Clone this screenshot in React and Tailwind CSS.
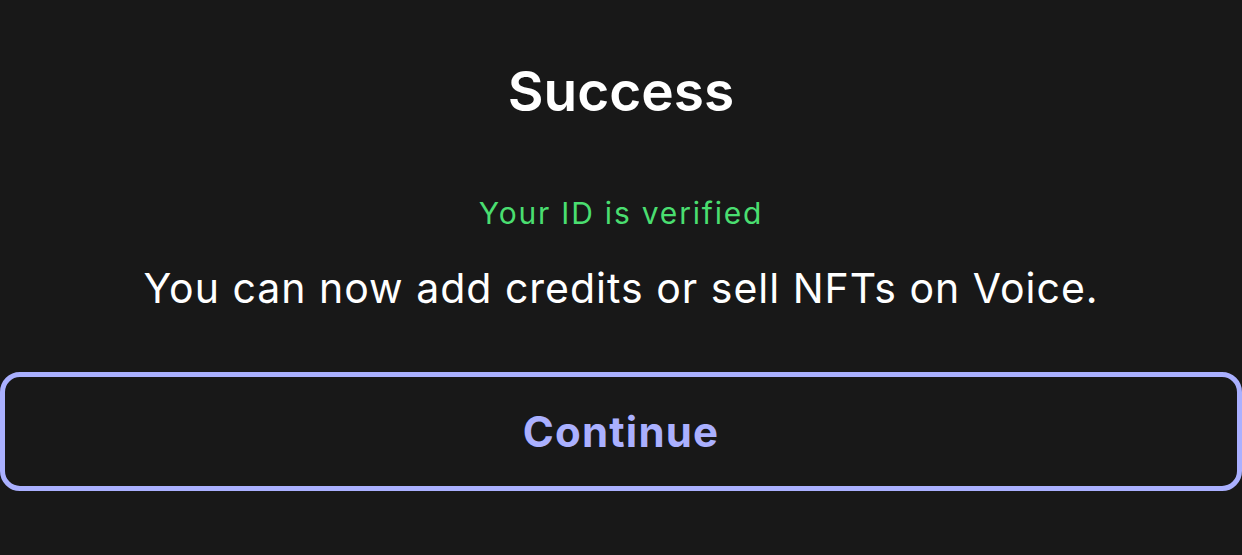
export default function App() {
  return (
    <div
      className="w-[1242px] h-[555px] bg-[#181818] flex flex-col items-center text-white"
      style={{ fontFamily: 'Inter, "Noto Sans", sans-serif' }}
    >
      <h1 className="mt-[58px] text-[55px] leading-[66px] font-semibold">Success</h1>
      <p className="mt-[71px] text-[30px] leading-[36px] text-[#4ade70] tracking-[1.8px]">Your ID is verified</p>
      <p className="mt-[32px] text-[41px] leading-[50px] tracking-[1px]">
        You can now add credits or sell NFTs on Voice.
      </p>
      <button className="mt-[59px] w-full h-[119px] rounded-[20px] border-[5px] border-[#aab0ff] text-[#aab0ff] text-[42px] font-bold tracking-[1.2px]">
        Continue
      </button>
    </div>
  );
}
